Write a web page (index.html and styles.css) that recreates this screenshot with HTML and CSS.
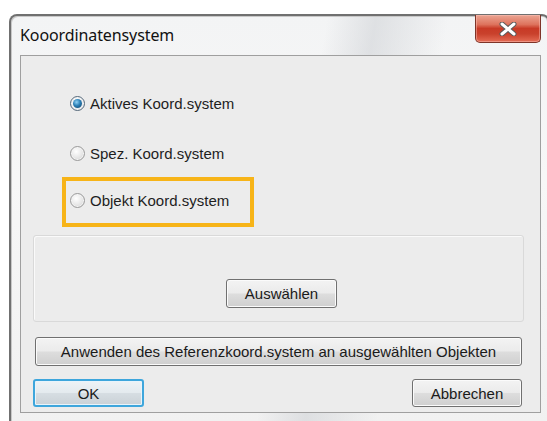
FILE: index.html
```html
<!DOCTYPE html>
<html lang="de">
<head>
<meta charset="utf-8">
<title>Kooordinatensystem</title>
<link rel="stylesheet" href="styles.css">
</head>
<body>
<div class="window">
  <div class="titlebar">
    <span class="title">Kooordinatensystem</span>
    <button class="close" aria-label="Schließen">
      <svg width="20" height="14" viewBox="0 0 20 14">
        <path d="M4 2 L16 12 M16 2 L4 12" stroke="#5a5a5a" stroke-width="5" stroke-linecap="round"/>
        <path d="M4 2 L16 12 M16 2 L4 12" stroke="#ffffff" stroke-width="3" stroke-linecap="round"/>
      </svg>
    </button>
  </div>
  <div class="client">
    <div class="options">
      <label class="option"><span class="radio checked"></span>Aktives Koord.system</label>
      <label class="option second"><span class="radio"></span>Spez. Koord.system</label>
      <div class="highlight">
        <label class="option"><span class="radio"></span>Objekt Koord.system</label>
      </div>
    </div>
    <div class="group">
      <button class="btn select">Auswählen</button>
    </div>
    <button class="btn apply">Anwenden des Referenzkoord.system an ausgewählten Objekten</button>
    <div class="actions">
      <button class="btn ok">OK</button>
      <button class="btn cancel">Abbrechen</button>
    </div>
  </div>
</div>
</body>
</html>
```

FILE: styles.css
```css
html, body {
  margin: 0;
  padding: 0;
  background: #ffffff;
  overflow: hidden;
  width: 547px;
  height: 421px;
}

body {
  font-family: "Liberation Sans", Arial, sans-serif;
  font-size: 15px;
  color: #1a1a1a;
}

/* Window frame (Aero basic look) */
.window {
  box-sizing: border-box;
  margin: 14px 0 0 9px;
  width: 541px;
  height: 410px;
  border: 2px solid #707070;
  border-bottom: none;
  border-radius: 8px 8px 0 0;
  box-shadow: inset 1px 1px 0 #c8c8c8, inset -1px 0 0 #c8c8c8;
  background:
    linear-gradient(100deg, rgba(255,255,255,0) 0%, rgba(255,255,255,0) 52%, rgba(205,208,212,0.55) 60%, rgba(255,255,255,0) 72%),
    linear-gradient(180deg, #f3f4f5 0%, #f7f7f7 40%, #f1f1f1 100%);
}

.titlebar {
  display: flex;
  justify-content: space-between;
  align-items: flex-start;
  height: 39px;
  padding: 0 7px 0 9px;
}

.title {
  font-family: "Noto Sans", "Open Sans", sans-serif;
  font-size: 16px;
  color: #111;
  margin-top: 8px;
  letter-spacing: -0.1px;
}

.close {
  box-sizing: border-box;
  width: 66px;
  height: 28px;
  margin-top: -1px;
  padding: 0;
  border: 1px solid #7e3428;
  border-top: none;
  border-radius: 0 0 5px 5px;
  background: linear-gradient(180deg, #eba593 0%, #de735d 35%, #c83a26 50%, #c9412c 70%, #e46c55 100%);
  box-shadow: inset 0 0 0 1px rgba(255,200,190,0.45);
  display: flex;
  align-items: center;
  justify-content: center;
}

/* Dialog body */
.client {
  box-sizing: border-box;
  margin-left: 9px;
  width: 521px;
  height: 358px;
  border: 1px solid #9f9f9f;
  background: #ececec;
  display: flex;
  flex-direction: column;
}

.options {
  display: flex;
  flex-direction: column;
  align-items: flex-start;
  padding: 37px 0 0 49px;
}

.option {
  display: flex;
  align-items: center;
  height: 20px;
  gap: 5px;
  color: #1e1e1e;
}

.option.second {
  margin-top: 30px;
}

.radio {
  box-sizing: border-box;
  width: 15px;
  height: 15px;
  border-radius: 50%;
  border: 1px solid #9a9a9a;
  background: radial-gradient(circle at 40% 35%, #ffffff 0%, #e6e6e6 55%, #cbcbcb 100%);
  box-shadow: inset 0 0 0 1px #f4f4f4;
  display: flex;
  align-items: center;
  justify-content: center;
}

.radio.checked {
  border-color: #55687a;
  background: radial-gradient(circle at 40% 35%, #ffffff 0%, #d8dde2 100%);
}

.radio.checked::after {
  content: "";
  width: 9px;
  height: 9px;
  border-radius: 50%;
  background: radial-gradient(circle at 40% 35%, #8fd1f5 0%, #2b7fb5 45%, #0f3e63 100%);
}

.highlight {
  box-sizing: border-box;
  margin: 14px 0 0 -8px;
  width: 192px;
  height: 50px;
  border: 4px solid #f7b418;
  padding: 9px 0 0 4px;
}

/* Group area holding the pick button */
.group {
  box-sizing: border-box;
  margin: 8px 0 0 12px;
  width: 491px;
  height: 87px;
  border: 1px solid #d9d9d9;
  border-radius: 3px;
  box-shadow: inset 1px 1px 0 #fafafa;
  display: flex;
  justify-content: center;
  padding: 43px 0 0 6px;
}

.btn {
  box-sizing: border-box;
  height: 29px;
  padding: 0;
  border: 1px solid #707070;
  border-radius: 3px;
  font-family: "Liberation Sans", Arial, sans-serif;
  font-size: 15px;
  color: #1a1a1a;
  background: linear-gradient(180deg, #f3f3f3 0%, #ebebeb 48%, #dddddd 52%, #cfcfcf 100%);
  box-shadow: inset 0 0 0 1px #fbfbfb;
}

.select {
  width: 111px;
}

.apply {
  margin: 15px 0 0 14px;
  width: 487px;
}

.actions {
  display: flex;
  justify-content: space-between;
  margin: 13px 0 0 12px;
  width: 489px;
}

.ok, .cancel {
  height: 28px;
}

.ok {
  width: 111px;
  border: 2px solid #3ea6dc;
  box-shadow: inset 0 0 0 1px #e8f4fb;
  background: linear-gradient(180deg, #eef3f6 0%, #e4eaee 48%, #d6dde2 52%, #cad1d6 100%);
}

.cancel {
  width: 110px;
}
```
